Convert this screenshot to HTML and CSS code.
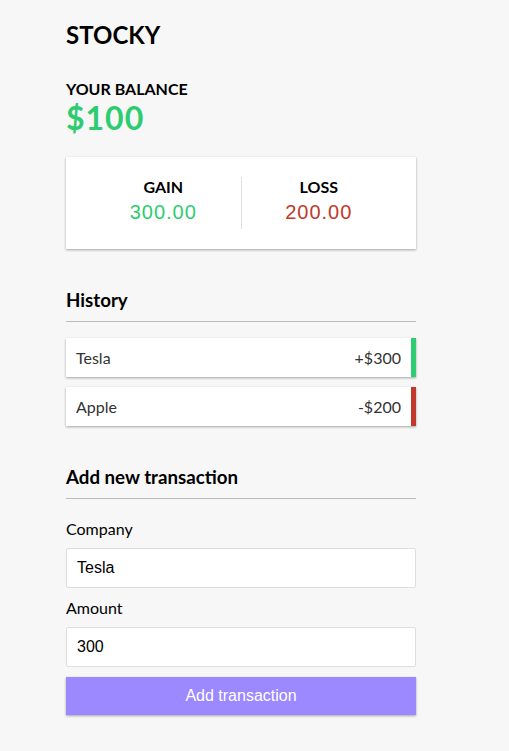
FILE: index.html
```html
<!DOCTYPE html>
<html lang="en">
<head>
  <meta charset="UTF-8">
  <meta name="viewport" content="width=device-width, initial-scale=1.0">
  <title>Stocky</title>
  <link rel="stylesheet" href="styles.css">
</head>
<body>

  <div class="container">
    <h2>STOCKY</h2>

    <h4>Your Balance</h4>
    <h1 id="balance">$100</h1>

    <div class="inc-exp-container">
      <div>
        <h4>Gain</h4>
        <p id="money-plus" class="money plus">300.00</p>
      </div>
      <div>
        <h4>Loss</h4>
        <p id="money-minus" class="money minus">200.00</p>
      </div>
    </div>

    <h3>History</h3>
    <ul id="list" class="list">
      <li class="plus">Tesla <span>+$300</span></li>
      <li class="minus">Apple <span>-$200</span></li>
    </ul>

    <h3>Add new transaction</h3>
    <form id="form">
      <div class="form-control">
        <label for="text">Company</label>
        <input type="text" id="text" value="Tesla" placeholder="Enter company...">
      </div>
      <div class="form-control">
        <label for="amount">Amount</label>
        <input type="number" id="amount" value="300" placeholder="Enter amount...">
      </div>
      <button class="btn" type="button">Add transaction</button>
    </form>
  </div>

</body>
</html>
```

FILE: styles.css
```css
:root {
  --box-shadow: 0 1px 3px rgba(0, 0, 0, 0.12), 0 1px 2px rgba(0, 0, 0, 0.24);
}
* {
  box-sizing: border-box;
}
body {
  background-color: #f7f7f7;
  font-family: 'Lato', 'Liberation Sans', sans-serif;
  margin: 0;
}
.container {
  width: 350px;
  margin: 20px 66px 30px;
}
h1 {
  font-size: 32px;
  color: #2ecc71;
  letter-spacing: 1px;
  margin: 0;
}
h2 {
  font-size: 24px;
  margin: 0 0 30px;
}
h3 {
  font-size: 18.72px;
  border-bottom: 1px solid #bbb;
  padding-bottom: 10px;
  margin: 40px 0 10px;
}
h4 {
  font-size: 16px;
  margin: 0;
  text-transform: uppercase;
}
.inc-exp-container {
  background-color: #fff;
  box-shadow: var(--box-shadow);
  padding: 20px;
  display: flex;
  justify-content: space-between;
  margin: 20px 0;
}
.inc-exp-container > div {
  flex: 1;
  text-align: center;
}
.inc-exp-container > div:first-of-type {
  border-right: 1px solid #dedede;
}
.money {
  font-family: 'Liberation Sans', Arial, sans-serif;
  font-size: 20px;
  letter-spacing: 1px;
  margin: 5px 0;
}
.money.plus {
  color: #2ecc71;
}
.money.minus {
  color: #c0392b;
}
.list {
  list-style-type: none;
  padding: 0;
  margin: 16px 0 40px;
}
.list li {
  background-color: #fff;
  box-shadow: var(--box-shadow);
  color: #333;
  display: flex;
  justify-content: space-between;
  padding: 10px;
  margin: 10px 0;
}
.list li.plus {
  border-right: 5px solid #2ecc71;
}
.list li.minus {
  border-right: 5px solid #c0392b;
}
label {
  display: inline-block;
  margin: 10px 0;
}
input[type='text'],
input[type='number'] {
  font-family: 'Liberation Sans', Arial, sans-serif;
  border: 1px solid #dedede;
  border-radius: 2px;
  display: block;
  font-size: 16px;
  padding: 10px;
  width: 100%;
  color: #000;
}
input[type='number']::-webkit-inner-spin-button {
  -webkit-appearance: none;
}
.btn {
  cursor: pointer;
  background-color: #9c88ff;
  box-shadow: var(--box-shadow);
  color: #fff;
  border: 0;
  display: block;
  font-family: 'Liberation Sans', Arial, sans-serif;
  font-size: 16px;
  margin: 10px 0 30px;
  padding: 10px;
  width: 100%;
}
```
